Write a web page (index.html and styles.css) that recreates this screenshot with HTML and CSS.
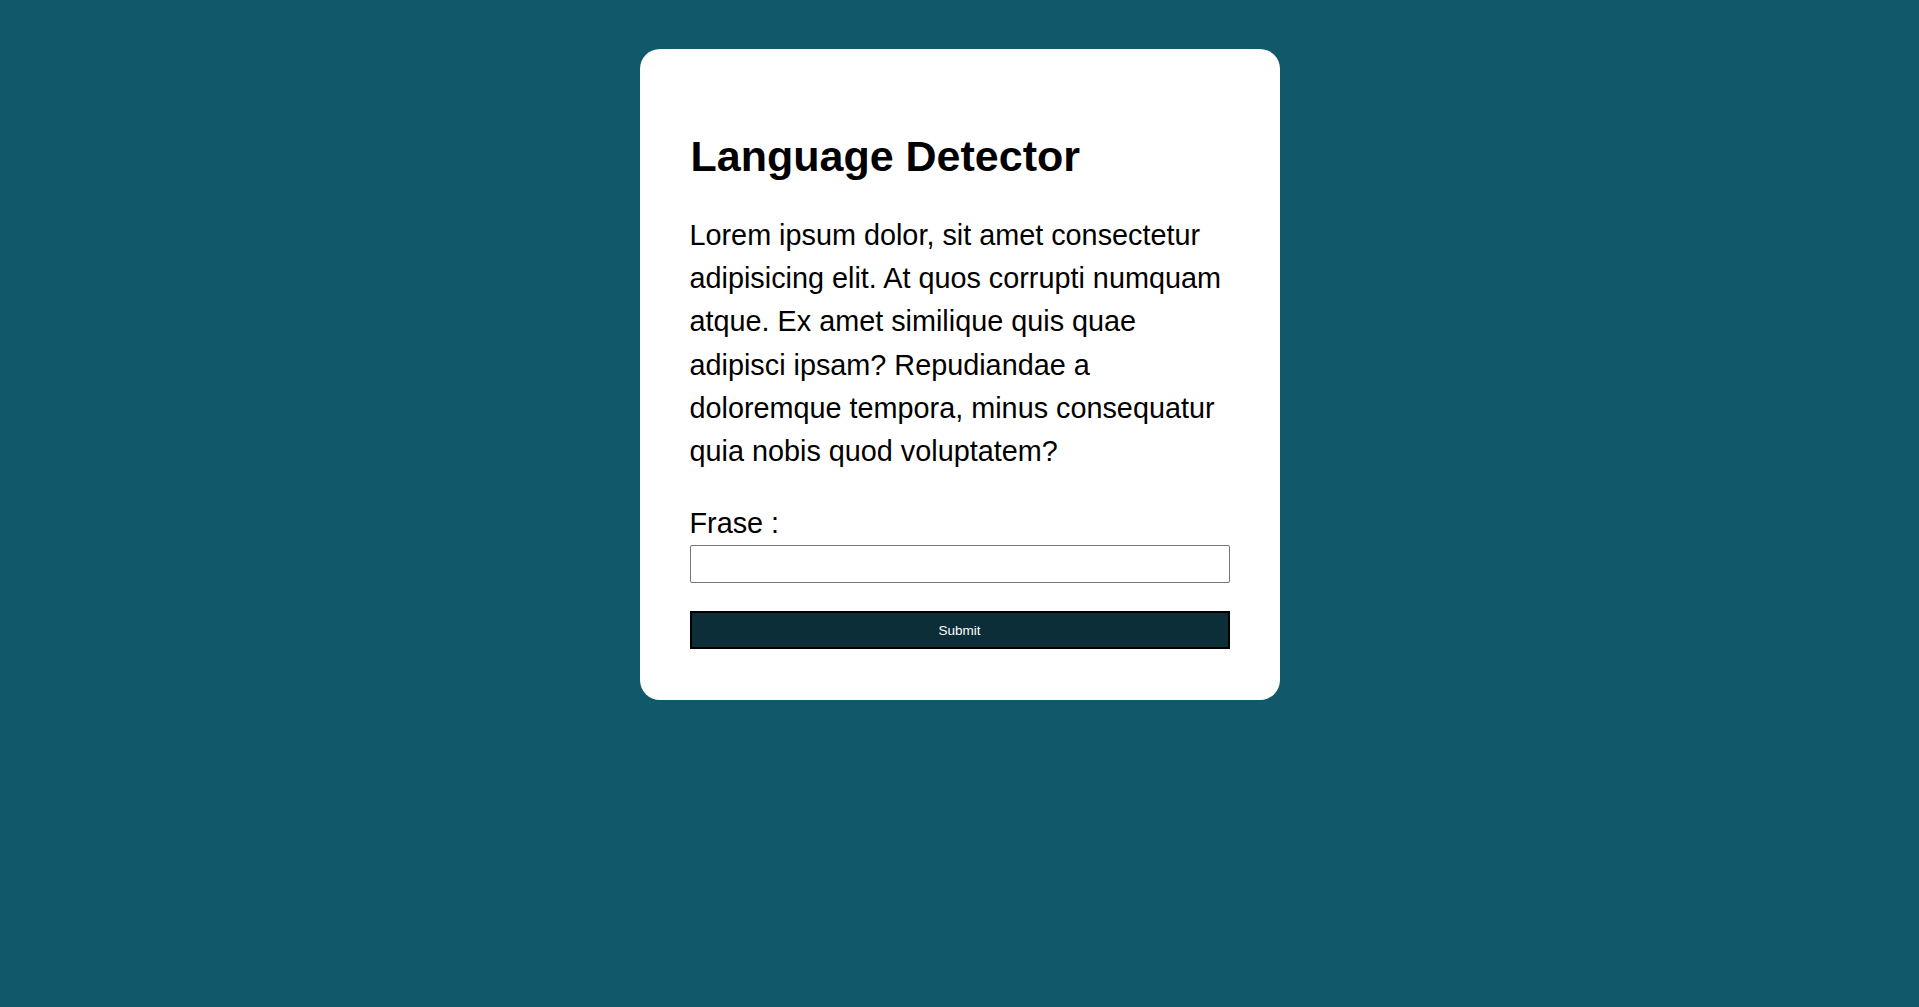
FILE: index.html
```html
<!DOCTYPE html>
<html lang="en">
<head>
<meta charset="utf-8">
<title>Language Detector</title>
<link rel="stylesheet" href="styles.css">
</head>
<body>
<main class="page">
  <section class="card">
    <h1 class="title">Language Detector</h1>
    <p class="intro">Lorem ipsum dolor, sit amet consectetur adipisicing elit. At quos corrupti numquam atque. Ex amet similique quis quae adipisci ipsam? Repudiandae a doloremque tempora, minus consequatur quia nobis quod voluptatem?</p>
    <form class="form" onsubmit="return false">
      <label class="label" for="frase">Frase :</label>
      <input class="input" id="frase" type="text">
      <button class="submit" type="submit">Submit</button>
    </form>
  </section>
</main>
</body>
</html>
```

FILE: styles.css
```css
html, body {
  margin: 0;
  padding: 0;
  height: 100%;
}

body {
  background: #11586a;
  font-family: "Liberation Sans", Arial, sans-serif;
  color: #000;
}

.page {
  display: flex;
  justify-content: center;
  padding-top: 49px;
}

.card {
  width: 640px;
  box-sizing: border-box;
  background: #fff;
  border-radius: 20px;
  padding: 50px 50px 51px;
}

.title {
  font-size: 43px;
  font-weight: 700;
  line-height: normal;
  margin: 33px 0 33px 1px;
}

.intro {
  font-size: 28.8px;
  line-height: 43.2px;
  margin: 0;
}

.form {
  display: flex;
  flex-direction: column;
  margin-top: 29px;
}

.label {
  font-size: 28.8px;
  line-height: 43px;
}

.input {
  box-sizing: border-box;
  width: 100%;
  height: 38px;
  border: 1px solid #767676;
  border-radius: 2px;
  margin: 0;
  padding: 0 6px;
  font-size: 16px;
  background: #fff;
}

.submit {
  box-sizing: border-box;
  width: 100%;
  height: 38px;
  margin-top: 28px;
  background: #0b2e38;
  color: #fff;
  border: 2px solid #000;
  font-family: "Liberation Sans", Arial, sans-serif;
  font-size: 13.5px;
  cursor: pointer;
}
```
